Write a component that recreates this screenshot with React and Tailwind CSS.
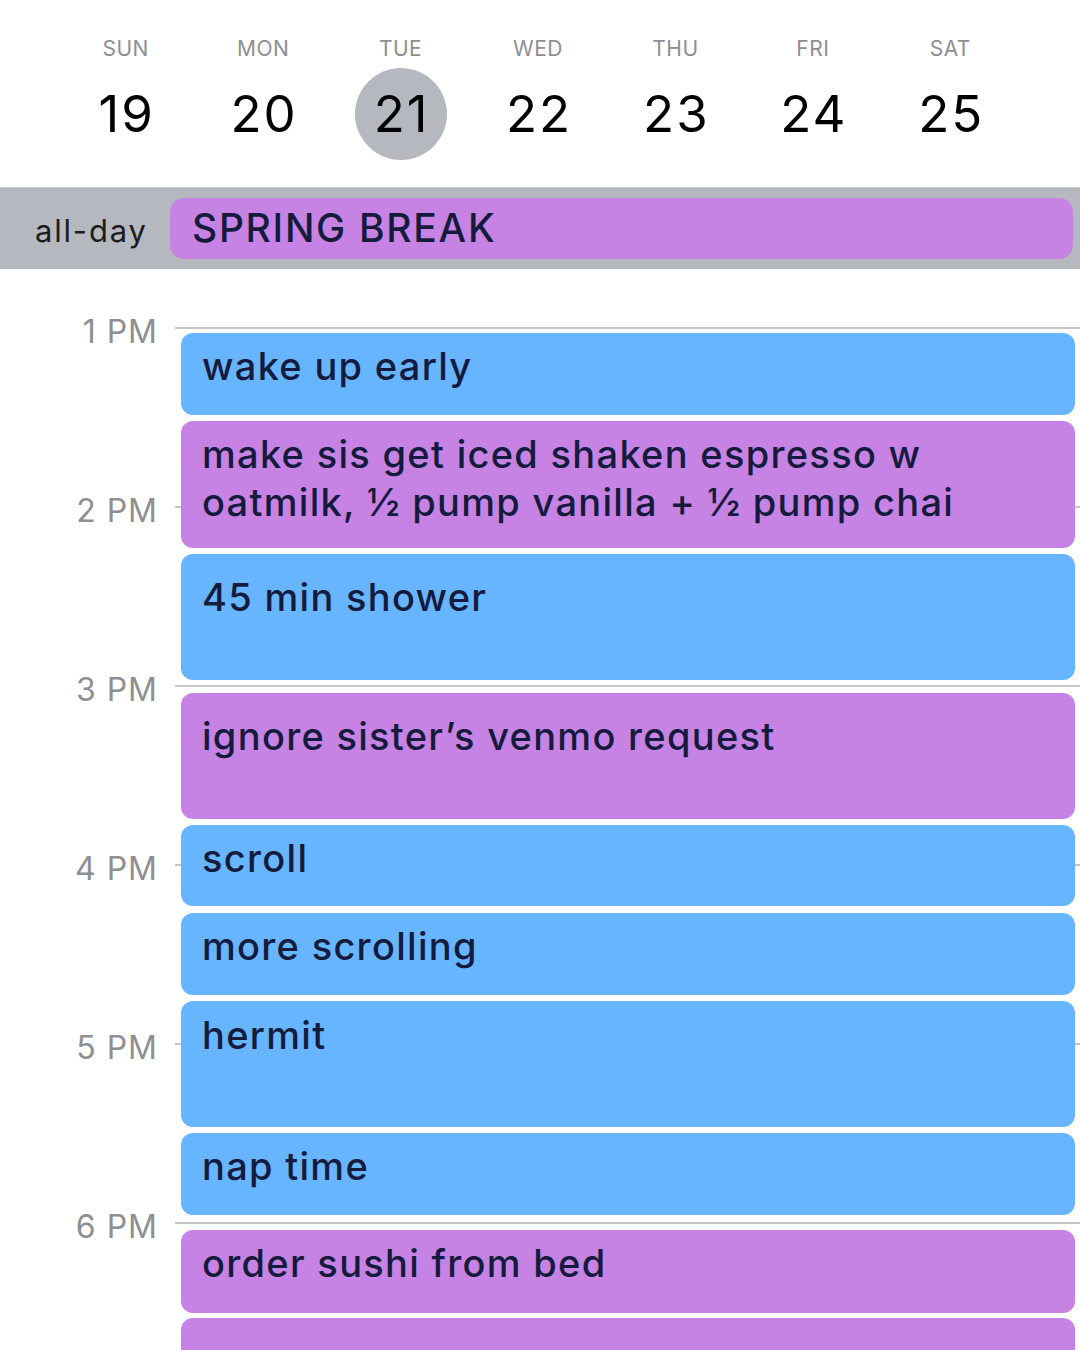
import React from 'react';

const days = [
  { label: 'SUN', num: 19 },
  { label: 'MON', num: 20 },
  { label: 'TUE', num: 21, today: true },
  { label: 'WED', num: 22 },
  { label: 'THU', num: 23 },
  { label: 'FRI', num: 24 },
  { label: 'SAT', num: 25 },
];

const hours = ['1 PM', '2 PM', '3 PM', '4 PM', '5 PM', '6 PM'];

// mt = gap from previous event, h = block height, pt = title offset
const events = [
  { title: 'wake up early', color: 'blue', h: 'h-[82px]', mt: 'mt-0', pt: 'pt-[9px]' },
  { title: 'make sis get iced shaken espresso w oatmilk, ½ pump vanilla + ½ pump chai', color: 'purple', h: 'h-[127px]', mt: 'mt-[6px]', pt: 'pt-[9px]' },
  { title: '45 min shower', color: 'blue', h: 'h-[126px]', mt: 'mt-[6px]', pt: 'pt-[19px]' },
  { title: 'ignore sister’s venmo request', color: 'purple', h: 'h-[126px]', mt: 'mt-[13px]', pt: 'pt-[19px]' },
  { title: 'scroll', color: 'blue', h: 'h-[81px]', mt: 'mt-[6px]', pt: 'pt-[9px]' },
  { title: 'more scrolling', color: 'blue', h: 'h-[82px]', mt: 'mt-[7px]', pt: 'pt-[9px]' },
  { title: 'hermit', color: 'blue', h: 'h-[126px]', mt: 'mt-[6px]', pt: 'pt-[10px]' },
  { title: 'nap time', color: 'blue', h: 'h-[82px]', mt: 'mt-[6px]', pt: 'pt-[9px]' },
  { title: 'order sushi from bed', color: 'purple', h: 'h-[83px]', mt: 'mt-[15px]', pt: 'pt-[9px]' },
  { title: '', color: 'purple', h: 'h-[82px]', mt: 'mt-[5px]', pt: 'pt-[9px]' },
];

const EventBlock = ({ title, color, h, mt, pt }) => (
  <div
    className={`${h} ${mt} ${pt} shrink-0 rounded-[12px] pl-[21px] pr-[20px] overflow-hidden ${
      color === 'blue' ? 'bg-[#66b5fe]' : 'bg-[#c683e4]'
    }`}
  >
    <p className="text-[38px] leading-[48px] font-medium text-[#141b3c] tracking-[1.3px]">{title}</p>
  </div>
);

export default function App() {
  return (
    <div className="w-[1080px] h-[1350px] overflow-hidden bg-white font-['Inter','Noto_Sans',sans-serif]">
      {/* week header */}
      <div className="h-[187px] grid grid-cols-7 pl-[57px] pr-[61px] pt-[37px]">
        {days.map(d => (
          <div key={d.label} className="flex flex-col items-center">
            <span className="text-[21px] leading-[24px] text-[#8e8e93] tracking-[0.5px]">{d.label}</span>
            <div
              className={`mt-[7px] w-[92px] h-[92px] rounded-full flex items-center justify-center text-[51px] tracking-[2px] text-black ${
                d.today ? 'bg-[#b5b9bf]' : ''
              }`}
            >
              <span className="pl-[2px]">{d.num}</span>
            </div>
          </div>
        ))}
      </div>

      {/* all-day row */}
      <div className="h-[82px] bg-[#b5b9bf] border-t border-[#c5c8cd] flex items-center">
        <span className="w-[170px] pl-[35px] pt-[6px] text-[31px] tracking-[1.8px] text-[#1c1c1e]">all-day</span>
        <div className="flex-1 mr-[7px] h-[61px] rounded-[14px] bg-[#c683e4] flex items-center pl-[22px]">
          <span className="text-[39px] font-medium text-[#141b3c] tracking-[1.7px]">SPRING BREAK</span>
        </div>
      </div>

      {/* timeline */}
      <div className="relative">
        <div className="flex flex-col gap-[139px] pt-[39px]">
          {hours.map(hr => (
            <div key={hr} className="flex items-center h-[40px]">
              <span className="w-[158px] text-right text-[32px] tracking-[1px] text-[#8e8e93] translate-y-[4px]">{hr}</span>
              <div className="flex-1 ml-[17px] h-[2px] bg-[#c6c6c8]" />
            </div>
          ))}
        </div>

        <div className="absolute left-[181px] right-[5px] top-[64px] flex flex-col">
          {events.map((e, i) => (
            <EventBlock key={i} {...e} />
          ))}
        </div>
      </div>
    </div>
  );
}
